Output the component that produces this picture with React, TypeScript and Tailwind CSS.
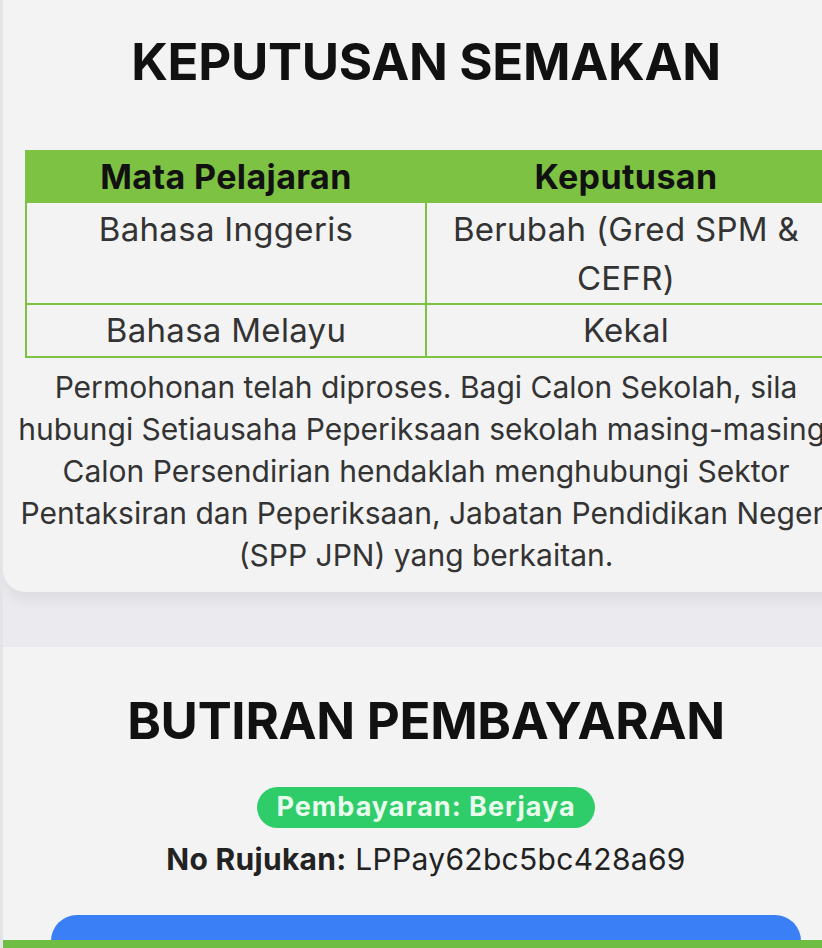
import React from "react";

export default function App() {
  const font = { fontFamily: "Inter, 'Liberation Sans', sans-serif" };
  return (
    <div
      className="relative w-[822px] h-[948px] overflow-hidden bg-[#ebebef] border-l-[3px] border-[#e4e4e6]"
      style={font}
    >
      {/* Card 1 */}
      <div className="w-[846px] bg-[#f3f3f3] rounded-b-[22px] shadow-[0_8px_14px_rgba(0,0,0,0.06)] pt-[36px] pb-[16px] relative z-10">
        <h1 className="text-center text-[51px] leading-[52px] font-bold text-[#111] tracking-[-0.3px]">
          KEPUTUSAN SEMAKAN
        </h1>
        <div className="mt-[62px] px-[22px]">
          <table className="w-full border-collapse table-fixed">
            <thead>
              <tr className="bg-[#7dc242]">
                <th className="border-2 border-[#7dc242] h-[51px] text-[34px] leading-[40px] font-bold text-[#111] text-center align-middle tracking-[0.4px]">
                  Mata Pelajaran
                </th>
                <th className="border-2 border-[#7dc242] h-[51px] text-[34px] leading-[40px] font-bold text-[#111] text-center align-middle tracking-[0.4px]">
                  Keputusan
                </th>
              </tr>
            </thead>
            <tbody>
              <tr>
                <td className="border-2 border-[#7dc242] h-[99px] text-[33px] leading-[49px] text-[#333] text-center align-top pt-[2px] tracking-[0.3px]">
                  Bahasa Inggeris
                </td>
                <td className="border-2 border-[#7dc242] h-[99px] text-[33px] leading-[49px] text-[#333] text-center align-top pt-[2px] tracking-[0.3px]">
                  Berubah (Gred SPM &amp;
                  <br />
                  CEFR)
                </td>
              </tr>
              <tr>
                <td className="border-2 border-[#7dc242] h-[53px] text-[33px] leading-[49px] text-[#333] text-center align-middle tracking-[0.3px]">
                  Bahasa Melayu
                </td>
                <td className="border-2 border-[#7dc242] h-[53px] text-[33px] leading-[49px] text-[#333] text-center align-middle tracking-[0.3px]">
                  Kekal
                </td>
              </tr>
            </tbody>
          </table>
        </div>
        <p className="mt-[8px] text-center text-[30px] leading-[42px] text-[#333] whitespace-nowrap">
          Permohonan telah diproses. Bagi Calon Sekolah, sila
          <br />
          hubungi Setiausaha Peperiksaan sekolah masing-masing.
          <br />
          Calon Persendirian hendaklah menghubungi Sektor
          <br />
          Pentaksiran dan Peperiksaan, Jabatan Pendidikan Negeri
          <br />
          (SPP JPN) yang berkaitan.
        </p>
      </div>

      {/* Card 2 */}
      <div className="mt-[55px] w-[846px] bg-[#f3f3f3] pt-[48px] flex flex-col items-center">
        <h2 className="text-center text-[51px] leading-[52px] font-bold text-[#111] tracking-[-0.3px]">
          BUTIRAN PEMBAYARAN
        </h2>
        <div className="mt-[40px] h-[41px] px-[19px] rounded-full bg-[#2fcc6a] flex items-center">
          <span className="text-[27px] font-bold text-[#e8fbec] tracking-[1px]">
            Pembayaran: Berjaya
          </span>
        </div>
        <div className="mt-[12px] text-[30px] leading-[38px] text-[#222] tracking-[0.3px]">
          <span className="font-bold">No Rujukan:</span> LPPay62bc5bc428a69
        </div>
        <div className="mt-[37px] w-[750px] h-[60px] rounded-[26px] bg-[#3a7ff5]" />
      </div>

      {/* bottom green bar */}
      <div className="absolute left-0 right-0 bottom-0 h-[8px] bg-[#70bd43] z-20" />
    </div>
  );
}
